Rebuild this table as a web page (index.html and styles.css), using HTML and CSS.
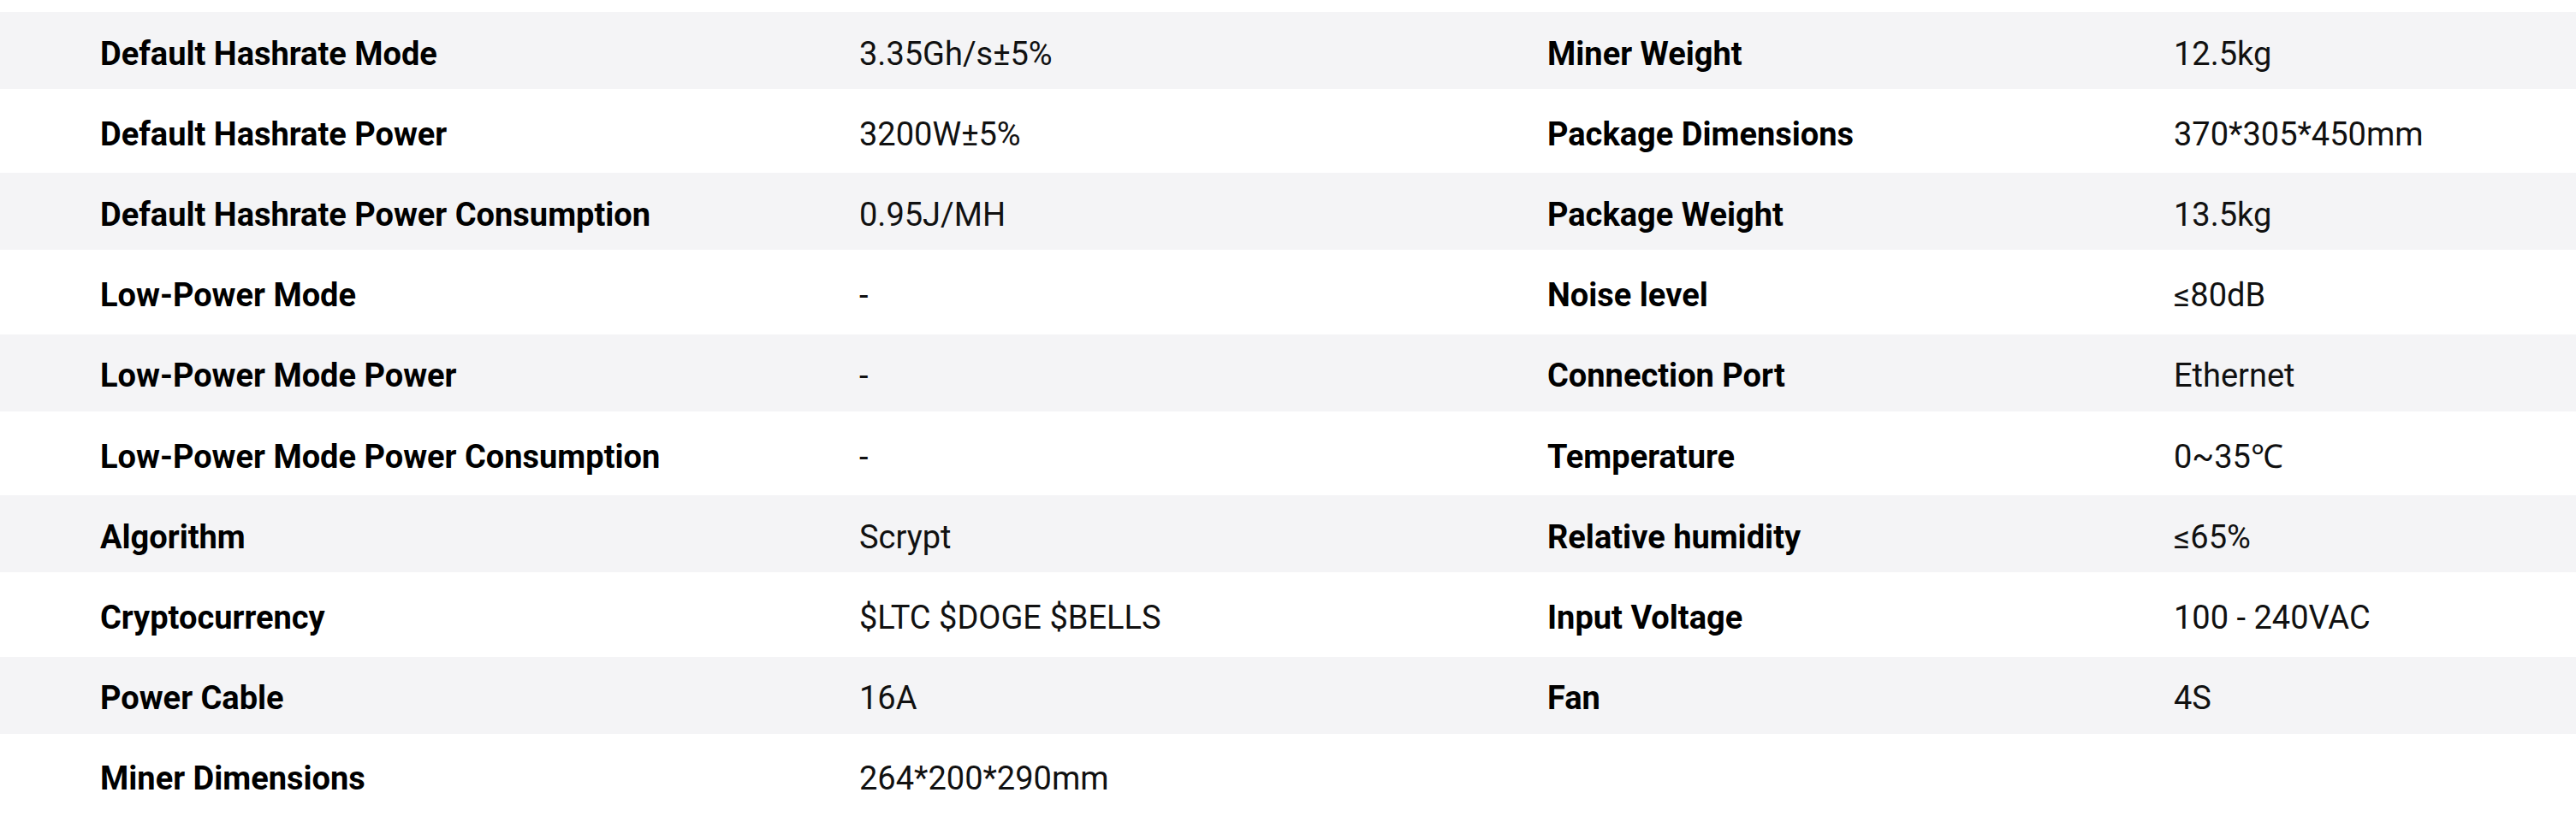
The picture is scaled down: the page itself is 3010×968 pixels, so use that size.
FILE: index.html
```html
<!DOCTYPE html>
<html lang="en">
<head>
<meta charset="utf-8">
<title>Specifications</title>
<link rel="stylesheet" href="styles.css">
</head>
<body>
<div class="specs">
  <div class="row shade"><span class="label">Default Hashrate Mode</span><span class="value">3.35Gh/s±5%</span><span class="label">Miner Weight</span><span class="value">12.5kg</span></div>
  <div class="row"><span class="label">Default Hashrate Power</span><span class="value">3200W±5%</span><span class="label">Package Dimensions</span><span class="value">370*305*450mm</span></div>
  <div class="row shade"><span class="label">Default Hashrate Power Consumption</span><span class="value">0.95J/MH</span><span class="label">Package Weight</span><span class="value">13.5kg</span></div>
  <div class="row"><span class="label">Low-Power Mode</span><span class="value">-</span><span class="label">Noise level</span><span class="value">≤80dB</span></div>
  <div class="row shade"><span class="label">Low-Power Mode Power</span><span class="value">-</span><span class="label">Connection Port</span><span class="value">Ethernet</span></div>
  <div class="row"><span class="label">Low-Power Mode Power Consumption</span><span class="value">-</span><span class="label">Temperature</span><span class="value">0~35℃</span></div>
  <div class="row shade"><span class="label">Algorithm</span><span class="value">Scrypt</span><span class="label">Relative humidity</span><span class="value">≤65%</span></div>
  <div class="row"><span class="label">Cryptocurrency</span><span class="value">$LTC $DOGE $BELLS</span><span class="label">Input Voltage</span><span class="value">100 - 240VAC</span></div>
  <div class="row shade"><span class="label">Power Cable</span><span class="value">16A</span><span class="label">Fan</span><span class="value">4S</span></div>
  <div class="row"><span class="label">Miner Dimensions</span><span class="value">264*200*290mm</span></div>
</div>
</body>
</html>
```
FILE: styles.css
```css
html, body {
  margin: 0;
  padding: 0;
  background: #ffffff;
}

body {
  font-family: Roboto, "Noto Sans", "Noto Sans CJK SC", sans-serif;
  color: #000000;
}

.specs {
  display: flex;
  flex-direction: column;
  gap: 4.2px;
  padding-top: 14px;
}

.row {
  display: grid;
  grid-template-columns: 887px 804px 732px 1fr;
  align-items: center;
  height: 90px;
  padding-left: 117px;
  font-size: 38px;
  line-height: 1.2;
}

.shade {
  background: #f4f4f6;
}

.label {
  font-weight: 700;
  color: #000000;
  padding-top: 9px;
}

.value {
  font-weight: 400;
  color: #111111;
  padding-top: 9px;
}
```
